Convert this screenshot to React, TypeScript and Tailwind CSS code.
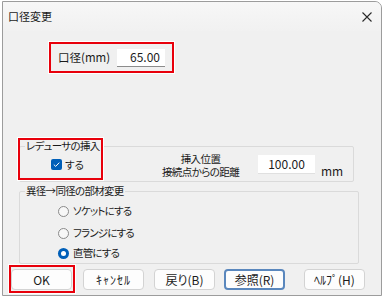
import React from "react";

const font = "[font-family:'Noto_Sans_CJK_JP',sans-serif] [font-feature-settings:'palt']";

function Btn({ label, focused, className = "" }: { label: string; focused?: boolean; className?: string }) {
  return (
    <div
      className={
        "w-[61px] h-[21px] flex items-center justify-center rounded-[4px] bg-[#fdfdfd] text-[12px] text-[#1b1b1b] whitespace-nowrap " +
        (focused ? "border-2 border-[#5a87bd] " : "border border-[#d3d3d3] ") +
        className
      }
    >
      {label}
    </div>
  );
}

function Radio({ checked, label, className = "" }: { checked?: boolean; label: string; className?: string }) {
  return (
    <div className={"h-[20px] flex items-center pl-[38px] " + className}>
      {checked ? (
        <div className="w-[11px] h-[11px] rounded-full bg-[#005fb8] flex items-center justify-center">
          <div className="w-[5px] h-[5px] rounded-full bg-white" />
        </div>
      ) : (
        <div className="w-[11px] h-[11px] rounded-full border border-[#8a8a8a] bg-[#f7f7f7]" />
      )}
      <span className="ml-[4px] text-[10.5px] tracking-[-0.8px] text-[#1b1b1b] whitespace-nowrap">{label}</span>
    </div>
  );
}

export default function App() {
  return (
    <div className={"w-[384px] h-[298px] bg-white pt-[1px] pl-[2px] " + font}>
      <div className="w-[380px] h-[295px] border border-[#9c9c9c] rounded-tr-[7px] bg-[#f0f0f0] flex flex-col overflow-hidden">
        {/* title bar */}
        <div className="h-[29px] shrink-0 flex items-center justify-between pl-[5px] pr-[9px] bg-gradient-to-b from-[#f7f7f7] to-[#f1f1f1]">
          <span className="text-[11px] text-[#1b1b1b]">口径変更</span>
          <svg width="10" height="10" viewBox="0 0 10 10">
            <path d="M0.5 0.5 L9.5 9.5 M9.5 0.5 L0.5 9.5" stroke="#2a2a2a" strokeWidth="1.1" fill="none" />
          </svg>
        </div>

        {/* body */}
        <div className="flex flex-col">
          {/* 口径 row */}
          <div className="ml-[46px] mt-[11px] w-[125px] h-[31px] border-2 border-[#e8000b] shadow-[0_0_0_1px_white] flex items-center pl-[7px]">
            <span className="w-[59px] text-[11.5px] text-[#1b1b1b] whitespace-nowrap">口径(mm)</span>
            <div className="w-[48px] h-[18px] bg-white border-b border-[#8c8c8c] flex items-center justify-end pr-[5px] text-[12px] text-[#1b1b1b]">
              65.00
            </div>
          </div>

          {/* group 1 */}
          <div className="relative ml-[16px] mt-[73px] w-[335px] h-[36px] border border-[#dadada] rounded-[2px] flex items-center">
            <span className="absolute left-[5px] -top-[8px] bg-[#f0f0f0] px-[1px] text-[10.5px] tracking-[-0.7px] leading-[14px] text-[#1b1b1b] whitespace-nowrap">
              レデューサの挿入
            </span>
            <div className="w-[142px] flex items-center pl-[31px] mt-[1px]">
              <div className="w-[11px] h-[11px] rounded-[2px] bg-[#005fb8] flex items-center justify-center">
                <svg width="9" height="9" viewBox="0 0 9 9">
                  <path d="M1.8 4.6 L3.7 6.4 L7.3 2.6" stroke="white" strokeWidth="1" fill="none" />
                </svg>
              </div>
              <span className="ml-[3px] text-[10.5px] text-[#1b1b1b]">する</span>
            </div>
            <div className="w-[77px] flex flex-col items-center text-[10.5px] tracking-[-0.6px] text-[#1b1b1b] mt-[2px] whitespace-nowrap">
              <span className="leading-[13px] h-[13px]">挿入位置</span>
              <span className="leading-[13px] h-[13px]">接続点からの距離</span>
            </div>
            <div className="ml-[19px] w-[57px] h-[19px] bg-white border-b border-[#e0e0e0] flex items-center justify-center text-[12px] text-[#1b1b1b]">
              100.00
            </div>
            <span className="ml-[6px] mt-[13px] text-[12px] text-[#1b1b1b]">mm</span>
            <div className="absolute -left-[2px] -top-[9px] w-[85px] h-[42px] border-2 border-[#e8000b] shadow-[0_0_0_1px_white]" />
          </div>

          {/* group 2 */}
          <div className="relative ml-[16px] mt-[9px] w-[340px] h-[73px] border border-[#dadada] rounded-[2px] flex flex-col">
            <span className="absolute left-[5px] -top-[8px] bg-[#f0f0f0] px-[1px] text-[10.5px] tracking-[-0.7px] leading-[14px] text-[#1b1b1b] whitespace-nowrap">
              異径→同径の部材変更
            </span>
            <Radio label="ソケットにする" className="mt-[9px]" />
            <Radio label="フランジにする" className="mt-[2px]" />
            <Radio label="直管にする" checked />
          </div>

          {/* buttons */}
          <div className="flex items-center mt-[5px] pl-[8px]">
            <div className="relative">
              <Btn label="OK" />
              <div className="absolute -left-[2px] -top-[4px] w-[66px] h-[28px] border-2 border-[#e8000b] shadow-[0_0_0_1px_white]" />
            </div>
            <Btn label="ｷｬﾝｾﾙ" className="ml-[11px] tracking-[1px]" />
            <Btn label="戻り(B)" className="ml-[10px]" />
            <Btn label="参照(R)" focused className="ml-[9px]" />
            <Btn label="ﾍﾙﾌﾟ(H)" className="ml-[19px]" />
          </div>
        </div>
      </div>
    </div>
  );
}
